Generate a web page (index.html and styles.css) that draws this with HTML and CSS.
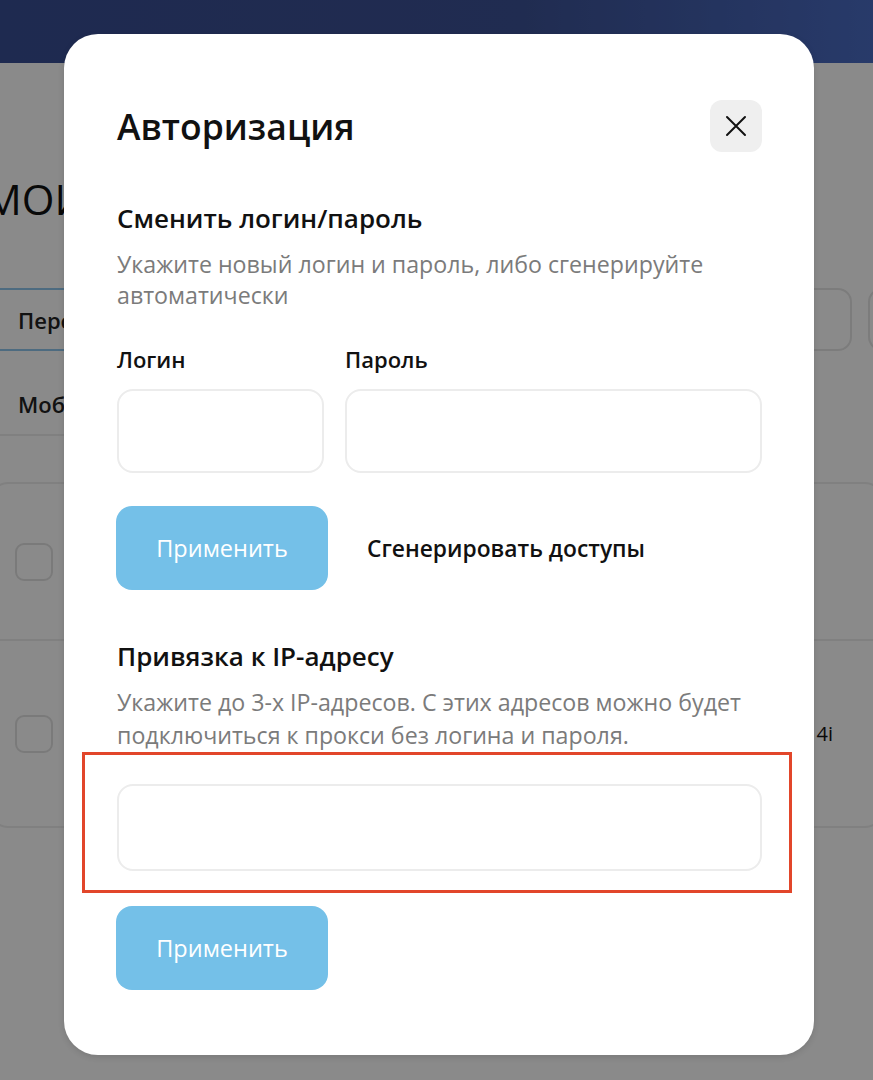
FILE: index.html
```html
<!DOCTYPE html>
<html lang="ru">
<head>
<meta charset="utf-8">
<title>Авторизация</title>
<link rel="stylesheet" href="styles.css">
</head>
<body>
<div class="page">
  <header class="topbar"></header>
  <main class="content">
    <h1 class="page-title">МОИ ПРОКСИ</h1>
    <div class="filters">
      <div class="tabs">
        <div class="tab tab-active">Персональные</div>
        <div class="tab tab-second">Мобильные</div>
      </div>
      <div class="filter-btn"><span class="filter-mark">Р</span></div>
      <div class="filter-btn2"></div>
    </div>
    <div class="list">
      <div class="list-row">
        <span class="check"></span>
        <span class="row-text"></span>
      </div>
      <div class="list-row">
        <span class="check"></span>
        <span class="row-text">4i</span>
      </div>
    </div>
  </main>
</div>

<div class="overlay">
  <div class="modal">
    <div class="modal-head">
      <h2 class="modal-title">Авторизация</h2>
      <button class="close-btn" aria-label="Закрыть">
        <svg width="22" height="22" viewBox="0 0 22 22"><path d="M2 2 L20 20 M20 2 L2 20" stroke="#111" stroke-width="2" fill="none" stroke-linecap="round"/></svg>
      </button>
    </div>

    <h3 class="sec-title">Сменить логин/пароль</h3>
    <p class="sec-desc">Укажите новый логин и пароль, либо сгенерируйте автоматически</p>

    <div class="cred-grid">
      <label class="field-label">Логин</label>
      <label class="field-label">Пароль</label>
      <div class="input"></div>
      <div class="input"></div>
    </div>

    <div class="actions">
      <button class="apply-btn">Применить</button>
      <button class="link-btn">Сгенерировать доступы</button>
    </div>

    <h3 class="sec-title sec-ip">Привязка к IP-адресу</h3>
    <p class="sec-desc sec-desc-ip">Укажите до 3-х IP-адресов. С этих адресов можно будет подключиться к прокси без логина и пароля.</p>

    <div class="highlight">
      <div class="input input-ip"></div>
    </div>

    <button class="apply-btn apply-ip">Применить</button>
  </div>
</div>
</body>
</html>
```

FILE: styles.css
```css
* { box-sizing: border-box; }
html, body { margin: 0; padding: 0; }
body {
  width: 873px;
  height: 1080px;
  overflow: hidden;
  font-family: "Open Sans", "Noto Sans", sans-serif;
  background: #ffffff;
  position: relative;
}

/* underlying page */
.topbar {
  height: 63px;
  background: linear-gradient(90deg, #394e94 0%, #3c5296 60%, #4a6cc4 100%);
}
.content {
  padding: 0;
  overflow: hidden;
}
.page-title {
  margin: 108px 0 0 -16px;
  font-size: 42px;
  font-weight: 500;
  line-height: 56px;
  color: #111;
  white-space: nowrap;
}
.filters {
  display: flex;
  margin-top: 61px;
  height: 63px;
}
.tabs {
  width: 400px;
  flex-shrink: 0;
}
.tab {
  height: 63px;
  display: flex;
  align-items: center;
  padding-left: 18px;
  font-size: 22px;
  font-weight: 600;
  color: #222;
  white-space: nowrap;
}
.tab-active {
  border-top: 2px solid #8fc6ed;
  border-bottom: 2px solid #8fc6ed;
}
.tab-second {
  height: 85px;
  align-items: flex-start;
  padding-top: 38px;
  border-bottom: 2px solid #ececec;
}
.filter-btn {
  flex-shrink: 0;
  margin-left: 390px;
  width: 62px;
  height: 63px;
  border: 2px solid #e6e6e6;
  border-radius: 14px;
  display: flex;
  align-items: center;
  padding-left: 8px;
  font-size: 20px;
  font-weight: 600;
  color: #111;
}
.filter-btn2 {
  flex-shrink: 0;
  margin-left: 16px;
  width: 40px;
  height: 63px;
  border: 2px solid #e6e6e6;
  border-radius: 14px;
}
.list {
  margin-top: 131px;
  margin-left: -10px;
  width: 893px;
  border: 2px solid #ececec;
  border-radius: 18px;
}
.list-row {
  height: 155px;
  display: flex;
  align-items: center;
  padding-left: 23px;
}
.list-row + .list-row {
  height: 187px;
  border-top: 2px solid #ececec;
}
.check {
  width: 38px;
  height: 38px;
  border: 2px solid #e2e2e2;
  border-radius: 9px;
}
.row-text {
  margin-left: auto;
  margin-right: 48px;
  font-size: 20px;
  color: #111;
}

/* overlay + modal */
.overlay {
  position: absolute;
  inset: 0;
  background: rgba(0, 0, 0, 0.46);
}
.modal {
  position: absolute;
  left: 64px;
  top: 34px;
  width: 750px;
  height: 1021px;
  background: #fff;
  border-radius: 34px;
  padding: 66px 52px 0 53px;
  box-shadow: 0 2px 6px rgba(0,0,0,0.12);
}
.modal-head {
  display: flex;
  justify-content: space-between;
  align-items: center;
  height: 52px;
}
.modal-title {
  margin: 0;
  font-size: 35.5px;
  font-weight: 600;
  line-height: 44px;
  color: #111;
}
.close-btn {
  width: 52px;
  height: 52px;
  border: none;
  border-radius: 12px;
  background: #efefef;
  display: flex;
  align-items: center;
  justify-content: center;
  padding: 0;
}
.sec-title {
  margin: 51px 0 0;
  font-size: 26px;
  font-weight: 600;
  line-height: 30px;
  color: #111;
}
.sec-desc {
  margin: 16px 0 0;
  font-size: 23.2px;
  line-height: 31px;
  color: #7b7b7b;
  font-weight: 400;
}
.cred-grid {
  display: grid;
  grid-template-columns: 207px 1fr;
  column-gap: 21px;
  row-gap: 16px;
  margin-top: 34px;
}
.field-label {
  font-size: 22px;
  font-weight: 600;
  line-height: 28px;
  color: #111;
}
.input {
  height: 84px;
  border: 2px solid #ececec;
  border-radius: 16px;
  background: #fff;
}
.actions {
  display: flex;
  align-items: center;
  margin-top: 33px;
  gap: 39px;
}
.apply-btn {
  width: 212px;
  height: 84px;
  margin-left: -1px;
  border: none;
  border-radius: 16px;
  background: #74c0e8;
  color: #fff;
  font-family: inherit;
  font-size: 23.5px;
  font-weight: 500;
}
.link-btn {
  border: none;
  background: none;
  padding: 0;
  font-family: inherit;
  font-size: 22.8px;
  font-weight: 600;
  color: #111;
}
.sec-ip {
  margin-top: 51px;
}
.sec-desc-ip {
  margin-top: 15px;
  line-height: 33px;
}
.highlight {
  margin: 0 -30px 0 -35px;
  border: 3px solid #e2462a;
  padding: 29px 27px 19px 32px;
}
.input-ip {
  height: 87px;
}
.apply-ip {
  margin-top: 13px;
}
```
